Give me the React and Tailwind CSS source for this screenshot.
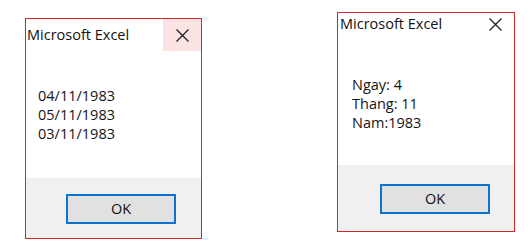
const font = { fontFamily: '"Open Sans", "Noto Sans", Arial, sans-serif' };

function CloseIcon() {
  return (
    <svg width="13" height="13" viewBox="0 0 13 13" className="block">
      <path d="M0.5 0.5 L12.5 12.5 M12.5 0.5 L0.5 12.5" stroke="#1f1f1f" strokeWidth="1.3" fill="none" />
    </svg>
  );
}

function OkButton() {
  return (
    <div className="w-[110px] h-[30px] border-2 border-[#0a74d1] bg-[#e1e1e1] flex items-center justify-center text-[14.5px] text-[#111]">
      OK
    </div>
  );
}

export default function App() {
  return (
    <div className="w-[532px] h-[247px] bg-white flex items-start" style={font}>
      {/* dialog 1 */}
      <div className="ml-[25px] mt-[18px] w-[177px] h-[221px] border border-[#d7262b] flex flex-col">
        <div className="h-[32px] flex items-center justify-between">
          <span className="pl-[1px] text-[14.5px] text-[#111]">Microsoft Excel</span>
          <div className="w-[38px] h-[32px] bg-[#fbe3e4] flex items-center justify-center">
            <CloseIcon />
          </div>
        </div>
        <div className="h-[127px] pt-[35px] pl-[12px] text-[14.5px] leading-[19px] text-[#151515]">
          <div>04/11/1983</div>
          <div>05/11/1983</div>
          <div>03/11/1983</div>
        </div>
        <div className="flex-1 bg-[#f0f0f0] pt-[16px] pl-[40px]">
          <OkButton />
        </div>
      </div>

      {/* dialog 2 */}
      <div className="ml-[135px] mt-[12px] w-[178px] h-[220px] border border-[#d7262b] flex flex-col">
        <div className="h-[22px] flex items-center justify-between pr-[12px]">
          <span className="pl-[2px] text-[14.5px] text-[#111]">Microsoft Excel</span>
          <CloseIcon />
        </div>
        <div className="h-[130px] pt-[40px] pl-[14px] text-[14.5px] leading-[19px] text-[#151515]">
          <div>Ngay: 4</div>
          <div>Thang: 11</div>
          <div>Nam:1983</div>
        </div>
        <div className="flex-1 bg-[#f0f0f0] pt-[19px] pl-[42px]">
          <OkButton />
        </div>
      </div>
    </div>
  );
}
